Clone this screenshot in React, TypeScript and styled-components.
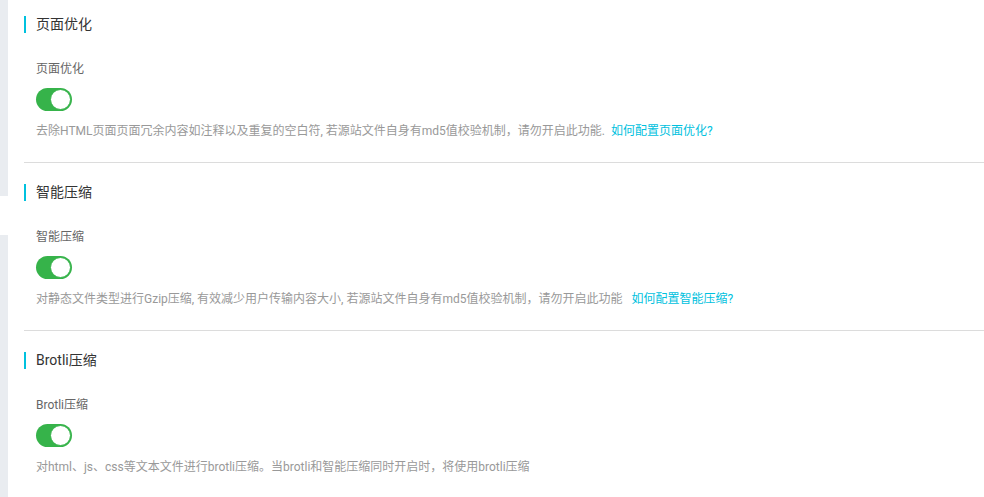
import React from 'react'
import styled, { createGlobalStyle } from 'styled-components'

const GlobalStyle = createGlobalStyle`
  html, body {
    margin: 0;
    padding: 0;
    background: #fff;
  }
  body {
    font-family: Roboto, "Noto Sans CJK SC", sans-serif;
  }
`

const Page = styled.div`
  display: flex;
  width: 984px;
  height: 497px;
  overflow: hidden;
`

const SideRail = styled.div`
  display: flex;
  flex-direction: column;
  width: 8px;
  flex-shrink: 0;
`

const RailBlock = styled.div<{ $height?: number }>`
  background: #e9ecf0;
  height: ${(props) => (props.$height ? `${props.$height}px` : 'auto')};
  flex: ${(props) => (props.$height ? '0 0 auto' : '1')};
  margin-bottom: ${(props) => (props.$height ? '39px' : '0')};
`

const Content = styled.div`
  flex: 1;
  padding-left: 16px;
`

const Section = styled.div<{ $last?: boolean }>`
  padding: 21px 0 22px;
  border-bottom: ${(props) => (props.$last ? 'none' : '1px solid #dcdcdc')};

  &:first-child {
    padding-top: 16px;
  }
`

const SectionTitle = styled.div`
  position: relative;
  height: 17px;
  line-height: 17px;
  padding-left: 12px;
  font-size: 14px;
  color: #333;

  &::before {
    content: '';
    position: absolute;
    left: 0;
    top: 0;
    width: 2px;
    height: 17px;
    background: #00c1de;
  }
`

const Field = styled.div`
  padding-left: 12px;
  margin-top: 27px;
`

const Label = styled.div`
  font-size: 12px;
  line-height: 18px;
  color: #666;
`

const Switch = styled.div<{ $on: boolean }>`
  position: relative;
  width: 36px;
  height: 23px;
  margin-top: 10px;
  border-radius: 12px;
  background: ${(props) => (props.$on ? '#36b34a' : '#ccc')};
  box-sizing: border-box;

  &::after {
    content: '';
    position: absolute;
    top: 1px;
    left: ${(props) => (props.$on ? '14px' : '1px')};
    width: 21px;
    height: 21px;
    border-radius: 50%;
    background: #fff;
    box-sizing: border-box;
    border: 1px solid #36b34a;
  }
`

const Description = styled.div`
  margin-top: 11px;
  font-size: 12px;
  line-height: 18px;
  color: #999;
  white-space: pre;
`

const HelpLink = styled.a`
  color: #00c1de;
  text-decoration: none;
  cursor: pointer;
`

interface OptionProps {
  title: string
  desc: string
  link?: string
  last?: boolean
}

const Option: React.FC<OptionProps> = ({ title, desc, link, last }) => (
  <Section $last={last}>
    <SectionTitle>{title}</SectionTitle>
    <Field>
      <Label>{title}</Label>
      <Switch $on />
      <Description>
        {desc}
        {link && <HelpLink>{link}</HelpLink>}
      </Description>
    </Field>
  </Section>
)

const App: React.FC = () => (
  <>
    <GlobalStyle />
    <Page>
      <SideRail>
        <RailBlock $height={196} />
        <RailBlock />
      </SideRail>
      <Content>
        <Option
          title="页面优化"
          desc="去除HTML页面页面冗余内容如注释以及重复的空白符, 若源站文件自身有md5值校验机制，请勿开启此功能.  "
          link="如何配置页面优化?"
        />
        <Option
          title="智能压缩"
          desc="对静态文件类型进行Gzip压缩, 有效减少用户传输内容大小, 若源站文件自身有md5值校验机制，请勿开启此功能   "
          link="如何配置智能压缩?"
        />
        <Option
          title="Brotli压缩"
          desc="对html、js、css等文本文件进行brotli压缩。当brotli和智能压缩同时开启时，将使用brotli压缩"
          last
        />
      </Content>
    </Page>
  </>
)

export default App
